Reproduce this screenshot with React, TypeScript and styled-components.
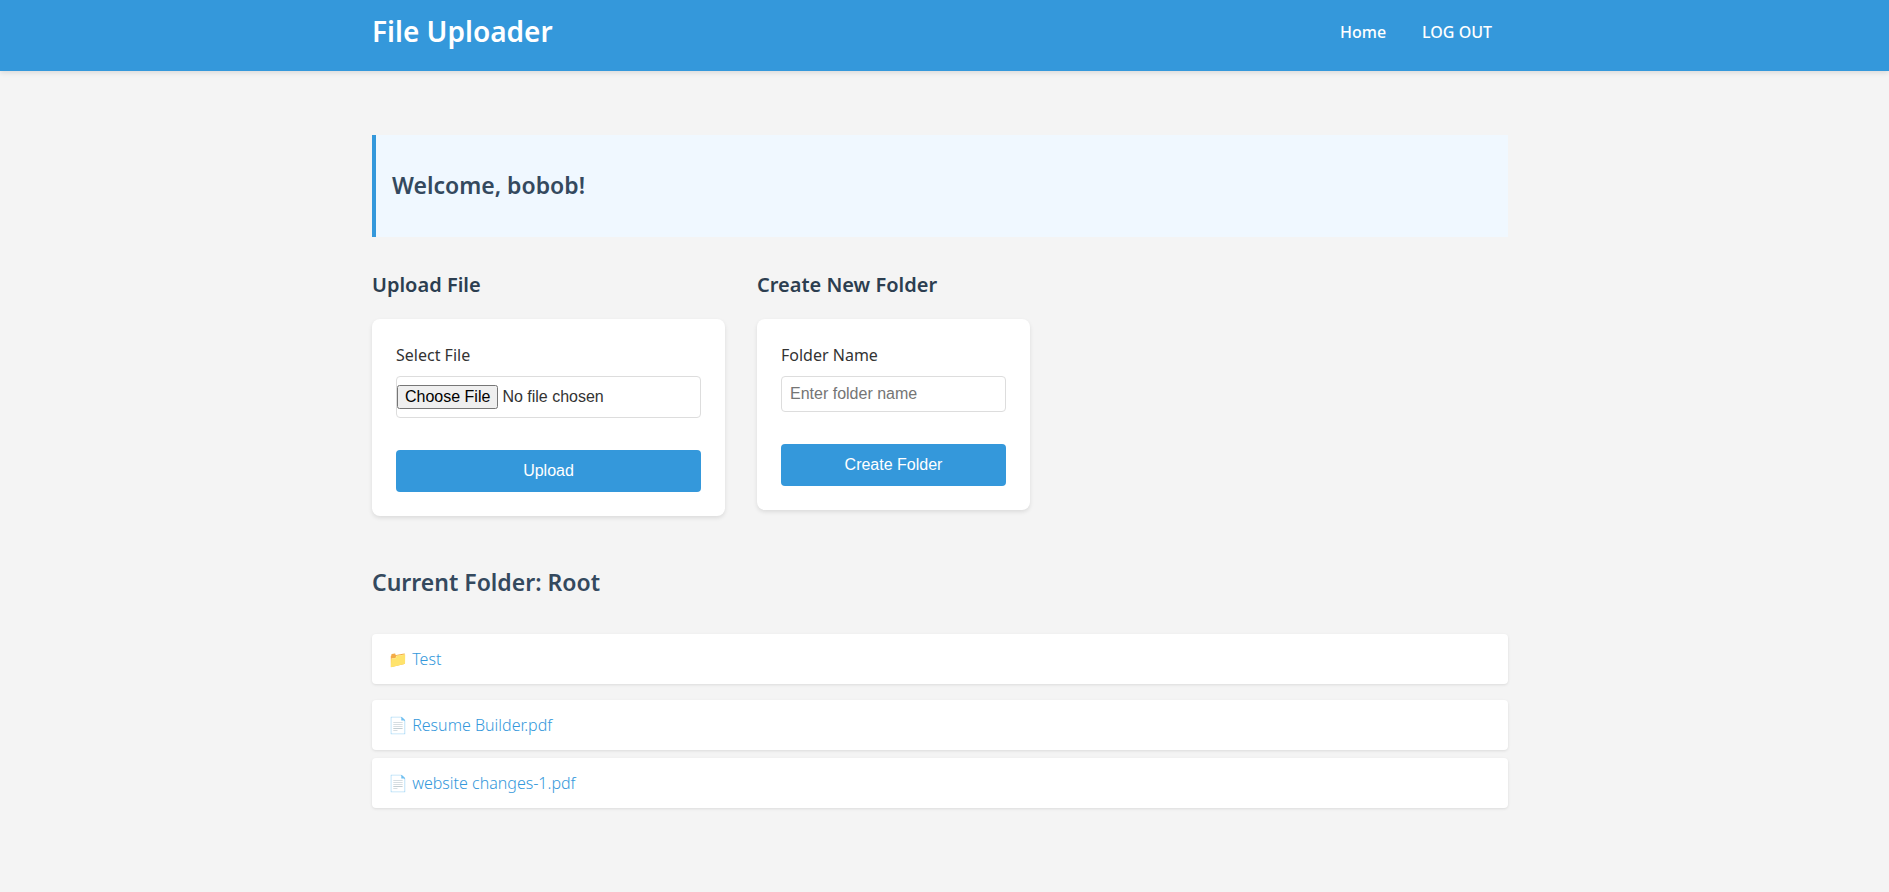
import React from "react";
import styled, { createGlobalStyle } from "styled-components";

const GlobalStyle = createGlobalStyle`
  *, *::before, *::after { box-sizing: border-box; }
  body {
    margin: 0;
    background: #f4f4f4;
    color: #333;
    font-family: "Noto Sans", sans-serif;
    font-size: 16px;
    line-height: 25px;
  }
  h1, h2, h3, ul { margin: 0; padding: 0; }
  ul { list-style: none; }
`;

const Header = styled.header`
  background: #3498db;
  box-shadow: 0 2px 5px rgba(0, 0, 0, 0.1);
  padding: 8px 9px 16px 0;
`;

const Container = styled.div`
  max-width: 1200px;
  margin: 0 auto;
  padding: 0 32px;
`;

const Bar = styled(Container)`
  display: flex;
  justify-content: space-between;
  align-items: center;
`;

const Brand = styled.h1`
  color: #fff;
  font-size: 28px;
  font-weight: 600;
  line-height: 47px;
`;

const Nav = styled.nav`
  display: flex;
  gap: 4px;
`;

const NavLink = styled.a`
  color: #fff;
  font-weight: 500;
  line-height: 24px;
  padding: 8px 16px;
  text-decoration: none;
`;

const Page = styled.main`
  padding: 64px 9px 64px 0;
`;

const Welcome = styled.section`
  background: #f0f8ff;
  border-left: 4px solid #3498db;
  padding: 32px 16px 16px;
`;

const Title = styled.h2`
  color: #34495e;
  font-size: 23px;
  font-weight: 600;
  line-height: 36px;
  padding-bottom: 18px;
`;

const Forms = styled.div`
  display: flex;
  flex-wrap: wrap;
  align-items: flex-start;
  gap: 32px;
  padding: 32px 0 48px;
`;

const SectionTitle = styled.h3`
  color: #2c3e50;
  font-size: 20px;
  font-weight: 600;
  line-height: 32px;
  padding-bottom: 18px;
`;

const Card = styled.form`
  display: flex;
  flex-direction: column;
  background: #fff;
  border-radius: 8px;
  box-shadow: 0 2px 4px rgba(0, 0, 0, 0.1);
  padding: 24px;
`;

const Label = styled.label`
  margin-bottom: 8px;
`;

const Field = styled.input`
  border: 1px solid #ddd;
  border-radius: 4px;
  color: #333;
  font: 16px "Liberation Sans", sans-serif;
  margin-bottom: 32px;
  padding: 8px;

  &[type="file"] {
    padding: 8px 0;
  }
`;

const Submit = styled.button`
  background: #3498db;
  border: 0;
  border-radius: 4px;
  color: #fff;
  cursor: pointer;
  font: 16px "Liberation Sans", sans-serif;
  padding: 12px 16px;
`;

const List = styled.ul`
  display: flex;
  flex-direction: column;
  gap: 8px;
  margin-top: 16px;
`;

const Item = styled.li`
  background: #fff;
  border-radius: 4px;
  box-shadow: 0 1px 3px rgba(0, 0, 0, 0.1);
  line-height: 26px;
  padding: 12px 16px;
`;

const ItemLink = styled.a`
  color: #3498db;
  font-weight: 300;
  text-decoration: none;
`;

const folders = ["Test"];
const files = ["Resume Builder.pdf", "website changes-1.pdf"];

export default function App() {
  return (
    <>
      <GlobalStyle />
      <Header>
        <Bar>
          <Brand>File Uploader</Brand>
          <Nav>
            <NavLink href="#home">Home</NavLink>
            <NavLink href="#logout">LOG OUT</NavLink>
          </Nav>
        </Bar>
      </Header>
      <Page>
        <Container>
          <Welcome>
            <Title>Welcome, bobob!</Title>
          </Welcome>
          <Forms>
            <section>
              <SectionTitle>Upload File</SectionTitle>
              <Card>
                <Label htmlFor="file">Select File</Label>
                <Field id="file" type="file" />
                <Submit type="button">Upload</Submit>
              </Card>
            </section>
            <section>
              <SectionTitle>Create New Folder</SectionTitle>
              <Card>
                <Label htmlFor="folder">Folder Name</Label>
                <Field id="folder" type="text" placeholder="Enter folder name" />
                <Submit type="button">Create Folder</Submit>
              </Card>
            </section>
          </Forms>
          <Title>Current Folder: Root</Title>
          <List>
            {folders.map((name) => (
              <Item key={name}><ItemLink href="#folder">📁 {name}</ItemLink></Item>
            ))}
          </List>
          <List>
            {files.map((name) => (
              <Item key={name}><ItemLink href="#file">📄 {name}</ItemLink></Item>
            ))}
          </List>
        </Container>
      </Page>
    </>
  );
}
